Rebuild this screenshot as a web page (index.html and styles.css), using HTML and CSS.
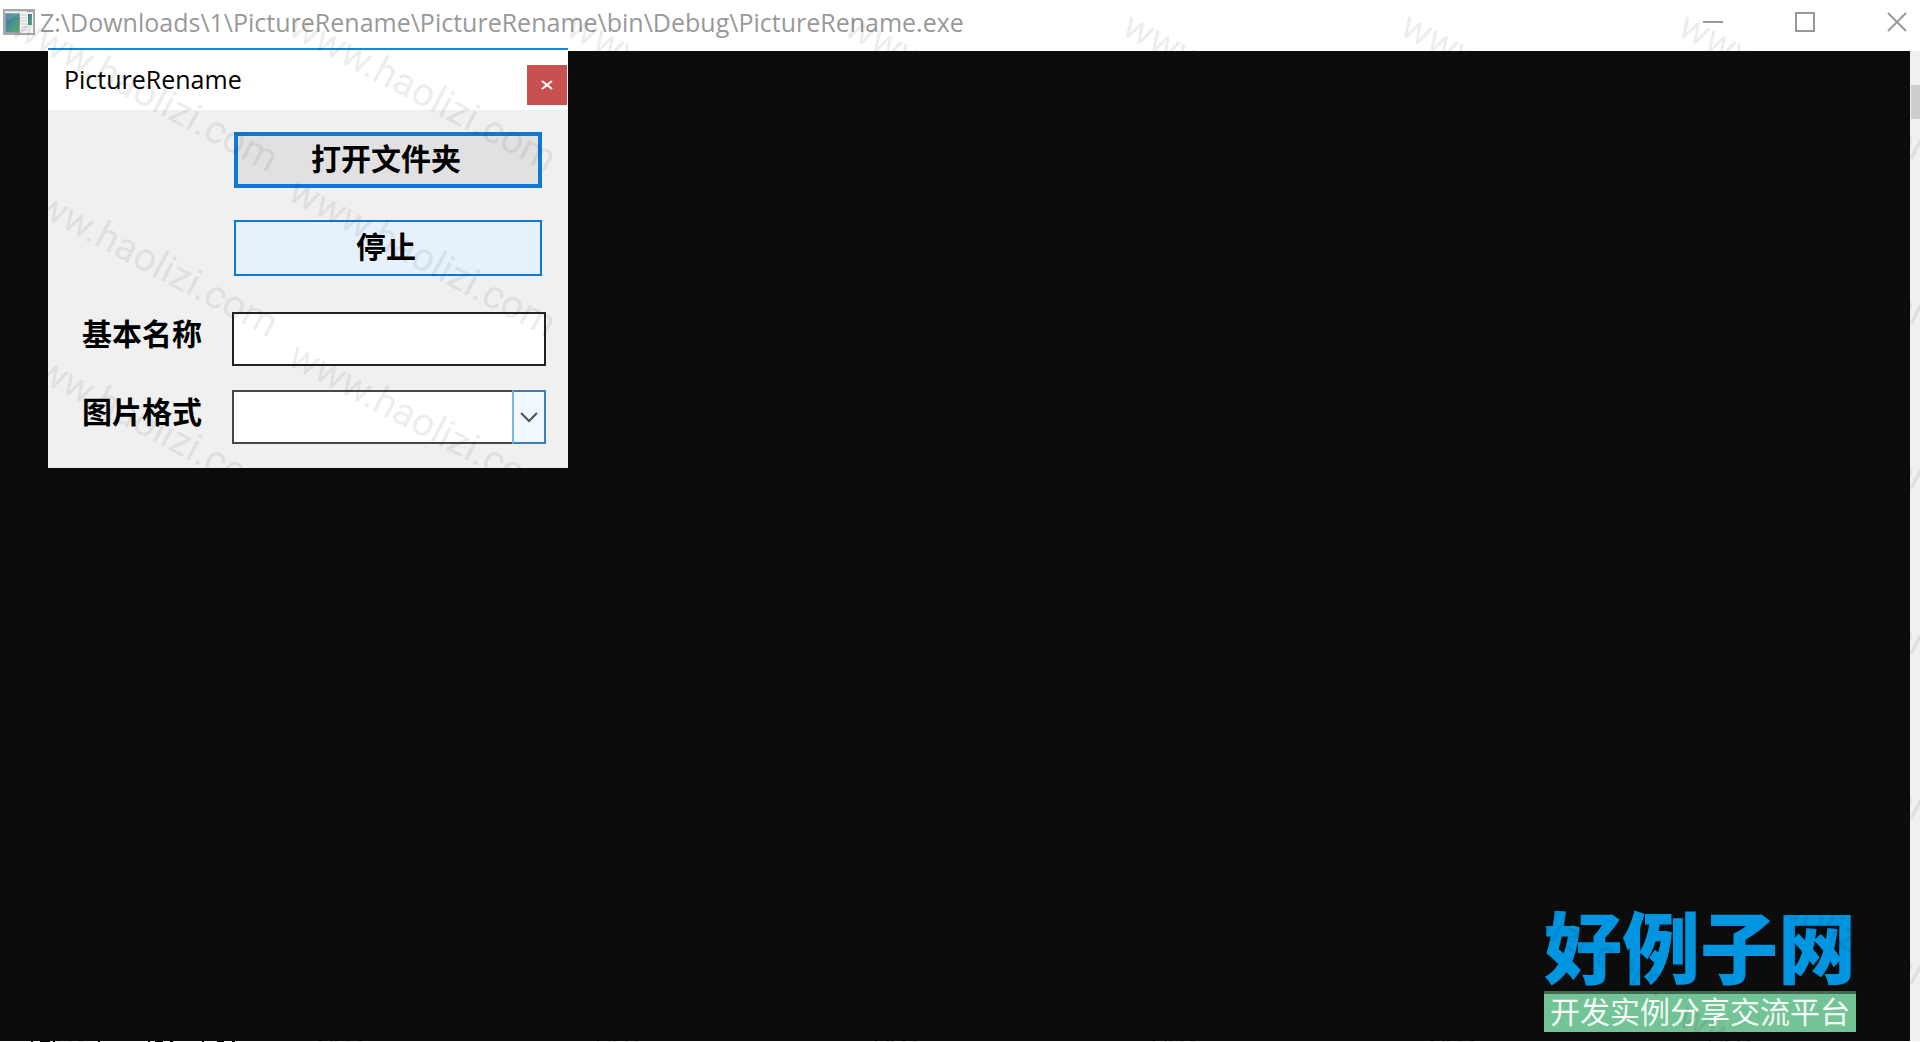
FILE: index.html
```html
<!DOCTYPE html>
<html lang="zh-CN">
 <head>
  <meta charset="UTF-8">
  <title>PictureRename</title>
  <link rel="stylesheet" href="styles.css">
 </head>

 <body>
	<header class="titlebar">
		<svg class="app_icon" width="32" height="26" viewBox="0 0 32 26">
			<defs>
				<linearGradient id="screen" x1="0" y1="0" x2="1" y2="1">
					<stop offset="0" stop-color="#3a6ea5"/>
					<stop offset="0.6" stop-color="#4a9a86"/>
					<stop offset="1" stop-color="#62b56a"/>
				</linearGradient>
			</defs>
			<rect x="1" y="1" width="30" height="24" fill="#f4f4f4" stroke="#a8a8a8" stroke-width="2"/>
			<path d="M2 2.5H30" stroke="#d5dce4"/>
			<path d="M24 2.5H30" stroke="#8d97a6"/>
			<rect x="2.500" y="4.500" width="14" height="19" fill="url(#screen)" stroke="#8fa6b8"/>
			<path d="M3 12Q10 10 16 5H3Z" fill="#fff" opacity="0.15"/>
			<path d="M18 6H24M18 9H24M18 12H24M18 15H24M18 18H24M18 21H24" stroke="#c8c8c8"/>
			<rect x="25" y="5" width="4" height="11" fill="url(#screen)"/>
		</svg>
		<span class="path">Z:\Downloads\1\PictureRename\PictureRename\bin\Debug\PictureRename.exe</span>
		<div class="win_buttons">
			<button type="button" aria-label="Minimize"><svg width="20" height="20"><path d="M0 10H20"/></svg></button>
			<button type="button" aria-label="Maximize"><svg width="20" height="20"><path d="M1 1H19V19H1Z"/></svg></button>
			<button type="button" aria-label="Close"><svg width="20" height="20"><path d="M1 1L19 19M19 1L1 19"/></svg></button>
		</div>
	</header>

	<main class="console">
		<div class="screen"></div>
		<div class="scrollbar"><div class="thumb"></div></div>
	</main>
	<div class="below">
		<svg width="300" height="1"><path d="M31 .5H33M40 .5H50M53 .5H55M98 .5H100M148 .5H150M155 .5H163M170 .5H173M202 .5H204M217 .5H224M232 .5H235" stroke="#000"/></svg>
	</div>

	<form class="dialog">
		<div class="dialog_title">
			<span>PictureRename</span>
			<button type="button" class="dialog_close" aria-label="Close"><svg width="12" height="12"><path d="M1 2L11 10M11 2L1 10"/></svg></button>
		</div>
		<div class="dialog_body">
			<button type="button" class="btn btn_default">打开文件夹</button>
			<button type="button" class="btn btn_hot">停止</button>
			<div class="row">
				<label for="F_Name">基本名称</label>
				<input type="text" class="field" id="F_Name" name="F_Name">
			</div>
			<div class="row">
				<label for="F_Format">图片格式</label>
				<div class="combo">
					<select class="field" id="F_Format" name="F_Format"><option value=""></option></select>
					<span class="arrow"><svg width="18" height="12"><path d="M1 2L9 10L17 2"/></svg></span>
				</div>
			</div>
		</div>
	</form>

	<div class="logo">
		<div class="logo_name">好例子网</div>
		<div class="logo_slogan">开发实例分享交流平台</div>
	</div>

	<svg class="watermark" aria-hidden="true">
		<defs>
			<pattern id="mark" x="4" y="6" width="278" height="165" patternUnits="userSpaceOnUse">
				<text transform="translate(4 28) rotate(28)">www.haolizi.com</text>
			</pattern>
		</defs>
		<rect y="6" width="100%" height="100%" fill="url(#mark)"/>
	</svg>
 </body>
</html>
```
FILE: styles.css
```css
html,body{
	margin: 0;
	height: 100%;
}
body{
	position: relative;
	display: flex;
	flex-direction: column;
	overflow: hidden;
	background: #fff;
	font-family: "Open Sans", "Noto Sans CJK SC", sans-serif;
}
button{
	padding: 0;
	border: 0;
	background: none;
	font: inherit;
}
svg{
	display: block;
}
.titlebar{
	flex: none;
	display: flex;
	align-items: center;
	height: 44px;
	padding: 0 13px 7px 3px;
	color: #999;
}
.path{
	margin-left: 5px;
	font-size: 25px;
	line-height: 44px;
	white-space: nowrap;
}
.win_buttons{
	display: flex;
	gap: 72px;
	margin-left: auto;
}
.win_buttons path{
	fill: none;
	stroke: #999;
	stroke-width: 2;
}
.console{
	flex: 1;
	display: flex;
	min-height: 0;
}
.screen{
	flex: 1;
	background: #0c0c0c;
}
.scrollbar{
	width: 10px;
	padding-top: 34px;
	background: #f0f0f0;
}
.thumb{
	height: 34px;
	margin-left: 1px;
	background: #cdcdcd;
}
.below{
	flex: none;
	height: 1px;
	background: #fff;
}

/* rename dialog */
.dialog{
	position: absolute;
	left: 48px;
	top: 48px;
	width: 520px;
	border-top: solid 2px #1c85d4;
	background: #f0f0f0;
}
.dialog_title{
	display: flex;
	justify-content: space-between;
	height: 60px;
	padding: 0 1px 0 16px;
	background: #fff;
	font-size: 25px;
	line-height: 58px;
}
.dialog_close{
	display: flex;
	align-items: center;
	justify-content: center;
	width: 40px;
	height: 40px;
	margin-top: 15px;
	background: #c75050;
}
.dialog_close path{
	stroke: #fff;
	stroke-width: 2;
}
.dialog_body{
	display: flex;
	flex-direction: column;
	padding: 22px 22px 24px 34px;
}
.btn{
	align-self: flex-end;
	width: 308px;
	height: 56px;
	margin: 0 4px 32px 0;
	padding: 0 4px 2px 0;
	border: solid 2px #0f78d7;
	font-size: 30px;
	font-weight: bold;
	line-height: 44px;
}
.btn_default{
	border-width: 4px;
	background: #e1e1e1;
}
.btn_hot{
	margin-bottom: 36px;
	background: #e5f1fb;
}
.row{
	display: flex;
	justify-content: space-between;
}
.row + .row{
	margin-top: 24px;
}
.row label{
	font-size: 30px;
	font-weight: bold;
	line-height: 44px;
}
.field{
	box-sizing: border-box;
	width: 314px;
	height: 54px;
	padding: 0 10px;
	border: solid 2px #222;
	border-radius: 0;
	background: #fff;
	font: inherit;
	font-size: 24px;
}
.combo{
	position: relative;
}
.combo .field{
	display: block;
	border-color: #484848;
	appearance: none;
}
.arrow{
	position: absolute;
	top: 0;
	right: 0;
	bottom: 0;
	display: flex;
	align-items: center;
	justify-content: center;
	box-sizing: border-box;
	width: 34px;
	border: solid 2px #3c7fb1;
	border-left-color: #7ab8e8;
	background: #f1f7ff;
	pointer-events: none;
}
.arrow path{
	fill: none;
	stroke: #505050;
	stroke-width: 2;
}

/* site logo and watermark */
.logo{
	position: absolute;
	right: 64px;
	bottom: 10px;
	width: 312px;
	font-family: "Noto Sans CJK SC", sans-serif;
	text-align: center;
	white-space: nowrap;
}
.logo_name{
	padding-bottom: 5px;
	color: #0095e1;
	font-size: 78px;
	font-weight: 900;
	line-height: 84px;
}
.logo_slogan{
	padding-bottom: 6px;
	border-top: solid 3px #3f6b53;
	background: #72c395;
	color: #f4fbf7;
	font-size: 30px;
	line-height: 32px;
}
.watermark{
	position: absolute;
	top: 0;
	left: 0;
	width: 100%;
	height: 100%;
	pointer-events: none;
}
.watermark text{
	font-family: Roboto, sans-serif;
	font-size: 39px;
	fill: #000;
	fill-opacity: 0.07;
}
```
